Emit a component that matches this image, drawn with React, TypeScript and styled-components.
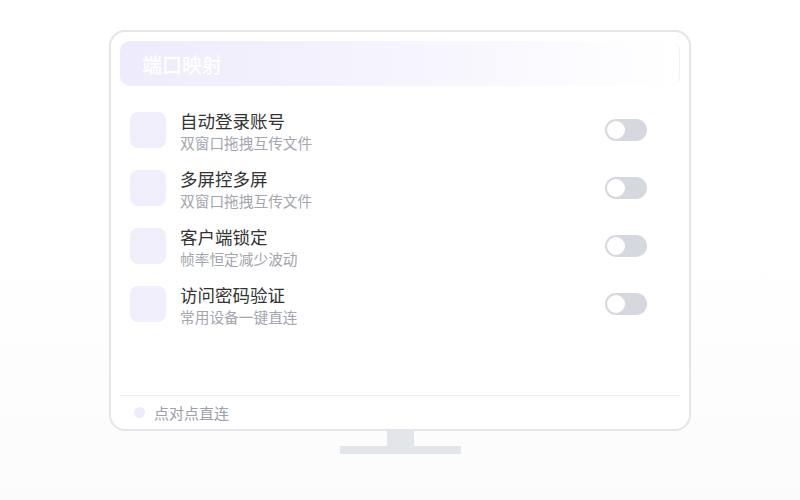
import * as React from 'react'
import styled, { createGlobalStyle } from 'styled-components'

const items = [
  { title: '自动登录账号', sub: '双窗口拖拽互传文件' },
  { title: '多屏控多屏', sub: '双窗口拖拽互传文件' },
  { title: '客户端锁定', sub: '帧率恒定减少波动' },
  { title: '访问密码验证', sub: '常用设备一键直连' },
]

export default function App() {
  return (
    <Page>
      <GlobalStyle />
      <Screen>
        <Header>
          <HeaderTitle>端口映射</HeaderTitle>
        </Header>

        <List>
          {items.map((item) => (
            <Row key={item.title}>
              <IconBox />
              <TextBlock>
                <Title>{item.title}</Title>
                <Sub>{item.sub}</Sub>
              </TextBlock>
              <Toggle>
                <Knob />
              </Toggle>
            </Row>
          ))}
        </List>

        <Footer>
          <Dot />
          <FooterText>点对点直连</FooterText>
        </Footer>
      </Screen>
      <Neck />
      <Base />
    </Page>
  )
}

const GlobalStyle = createGlobalStyle`
  html, body {
    margin: 0;
    padding: 0;
  }
  body {
    font-family: "Noto Sans CJK SC", "Noto Sans", sans-serif;
    background: #fff;
  }
`

const Page = styled.div`
  width: 800px;
  height: 500px;
  box-sizing: border-box;
  padding-top: 30px;
  display: flex;
  flex-direction: column;
  align-items: center;
  background: linear-gradient(180deg, #ffffff 0%, #ffffff 50%, #fbfbfc 100%);
`
const Screen = styled.div`
  width: 582px;
  height: 401px;
  box-sizing: border-box;
  border: 2px solid #e3e5ea;
  border-radius: 16px;
  background: #fff;
  padding: 9px 9px 0 9px;
  display: flex;
  flex-direction: column;
`
const Header = styled.div`
  height: 45px;
  border-radius: 10px;
  display: flex;
  align-items: center;
  padding-left: 22px;
  padding-top: 1px;
  box-sizing: border-box;
  background: linear-gradient(90deg, #eeebfc 0%, #f5f3fd 45%, #ffffff 100%);
  border-right: 1px solid #eef0f3;
`
const HeaderTitle = styled.div`
  color: #ffffff;
  font-size: 20px;
  font-weight: 500;
`
const List = styled.div`
  flex: 1;
  display: flex;
  flex-direction: column;
  gap: 17px;
  padding: 26px 33px 0 10px;
`
const Row = styled.div`
  display: flex;
  align-items: flex-start;
`
const IconBox = styled.div`
  width: 36px;
  height: 36px;
  border-radius: 8px;
  background: #f1eefc;
  flex-shrink: 0;
`
const TextBlock = styled.div`
  flex: 1;
  margin-left: 14px;
  margin-top: -2px;
`
const Title = styled.div`
  font-size: 17.5px;
  line-height: 22px;
  color: #333333;
`
const Sub = styled.div`
  margin-top: 1px;
  font-size: 14.7px;
  line-height: 20px;
  color: #a3a6ae;
`
const Toggle = styled.div`
  margin-top: 7px;
  width: 42px;
  height: 22px;
  border-radius: 11px;
  background: #d5d8de;
  box-sizing: border-box;
  padding: 2px;
`
const Knob = styled.div`
  width: 18px;
  height: 18px;
  border-radius: 50%;
  background: #fff;
`
const Footer = styled.div`
  height: 33px;
  border-top: 1px solid #eef0f3;
  display: flex;
  align-items: center;
  padding-left: 14px;
  gap: 9px;
`
const Dot = styled.div`
  width: 11px;
  height: 11px;
  border-radius: 50%;
  background: #efebfc;
`
const FooterText = styled.div`
  font-size: 15px;
  color: #9ca0a8;
`
const Neck = styled.div`
  width: 27px;
  height: 15px;
  background: #e2e5ea;
`
const Base = styled.div`
  width: 121px;
  height: 8px;
  background: #e2e5ea;
`
